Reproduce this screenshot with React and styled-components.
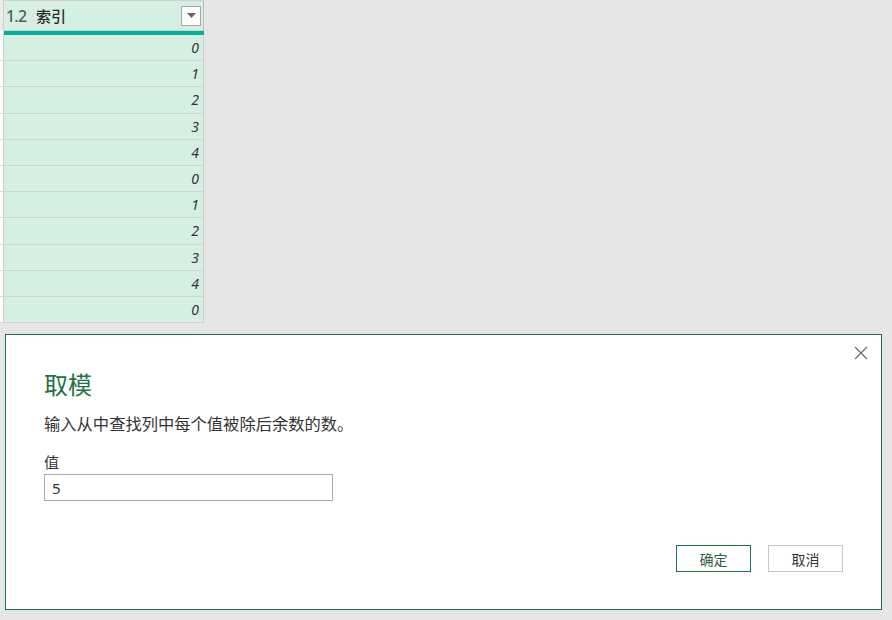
import React from 'react'
import styled, { createGlobalStyle } from 'styled-components'

const GlobalStyle = createGlobalStyle`
    html, body {
        margin: 0;
        padding: 0;
        background: #e6e6e6;
        font-family: "Noto Sans", "Noto Sans CJK SC", sans-serif;
        color: #333333;
    }
`

const values = [0, 1, 2, 3, 4, 0, 1, 2, 3, 4, 0]

const App = () => {
    return (
        <>
            <GlobalStyle />
            <Page>
                <Table>
                    <HeaderRow>
                        <Stub $header />
                        <HeaderCell>
                            <TypeTag>1.2</TypeTag>
                            <ColumnName>索引</ColumnName>
                            <FilterButton>
                                <svg width='9' height='5' viewBox='0 0 9 5'>
                                    <path d='M0 0 L9 0 L4.5 5 Z' fill='#666666' />
                                </svg>
                            </FilterButton>
                        </HeaderCell>
                    </HeaderRow>
                    <QualityRow>
                        <Stub />
                        <QualityBar />
                    </QualityRow>
                    {values.map((v, i) => (
                        <Row key={i}>
                            <Stub $line />
                            <Cell>{v}</Cell>
                        </Row>
                    ))}
                </Table>

                <Dialog>
                    <CloseButton aria-label='关闭'>
                        <svg width='14' height='14' viewBox='0 0 14 14'>
                            <path d='M1 1 L13 13 M13 1 L1 13' stroke='#6b6b6b' strokeWidth='1.2' />
                        </svg>
                    </CloseButton>
                    <Title>取模</Title>
                    <Description>输入从中查找列中每个值被除后余数的数。</Description>
                    <Label>值</Label>
                    <ValueInput defaultValue='5' />
                    <ButtonRow>
                        <Button $primary>确定</Button>
                        <Button>取消</Button>
                    </ButtonRow>
                </Dialog>
            </Page>
        </>
    )
}

export default App

const Page = styled.div`
    width: 892px;
    height: 620px;
    display: flex;
    flex-direction: column;
    overflow: hidden;
`

const Table = styled.div`
    display: flex;
    flex-direction: column;
    width: 204px;
`

const HeaderRow = styled.div`
    display: flex;
    height: 31px;
`

const Stub = styled.div`
    width: 4px;
    flex: none;
    box-sizing: border-box;
    background: ${(p) => (p.$header ? '#ececec' : '#ffffff')};
    border-right: 1px solid #cfcfcf;
    border-bottom: ${(p) => (p.$line ? '1px solid #d6d6d6' : 'none')};
`

const HeaderCell = styled.div`
    flex: 1;
    box-sizing: border-box;
    display: flex;
    align-items: center;
    padding: 0 2px 0 2px;
    background: #d5f0e2;
    border-top: 1px solid #cfcfcf;
    border-right: 1px solid #bcbcbc;
    border-bottom: 1px solid #d0d0d0;
`

const TypeTag = styled.span`
    font-family: "Noto Sans", sans-serif;
    font-size: 16px;
    font-weight: 500;
    color: #595959;
    letter-spacing: -0.8px;
    width: 30px;
`

const ColumnName = styled.span`
    flex: 1;
    font-family: "Noto Sans CJK SC", sans-serif;
    font-size: 15px;
    font-weight: 500;
    color: #2b2b2b;
`

const FilterButton = styled.div`
    width: 20px;
    height: 20px;
    box-sizing: border-box;
    border: 1px solid #a8a8a8;
    background: #ffffff;
    display: flex;
    align-items: center;
    justify-content: center;
`

const QualityRow = styled.div`
    display: flex;
    height: 4px;
`

const QualityBar = styled.div`
    flex: 1;
    background: #00b3a1;
`

const Row = styled.div`
    display: flex;
    height: 26.2px;
`

const Cell = styled.div`
    flex: 1;
    box-sizing: border-box;
    display: flex;
    align-items: center;
    justify-content: flex-end;
    padding-right: 4px;
    background: #d5f0e2;
    border-right: 1px solid #cccccc;
    border-bottom: 1px solid #d3d3d3;
    font-family: "Noto Sans", sans-serif;
    font-style: italic;
    font-size: 14px;
    color: #333333;
`

const Dialog = styled.div`
    position: relative;
    margin: 11px 0 0 5px;
    width: 877px;
    height: 276px;
    box-sizing: border-box;
    background: #ffffff;
    border: 1px solid #1f7044;
    padding: 33px 38px 0 38px;
    display: flex;
    flex-direction: column;
`

const CloseButton = styled.div`
    position: absolute;
    top: 10px;
    right: 12px;
    width: 16px;
    height: 16px;
    display: flex;
    align-items: center;
    justify-content: center;
`

const Title = styled.div`
    font-family: "Noto Sans CJK SC", sans-serif;
    font-size: 24px;
    line-height: 32px;
    color: #217346;
`

const Description = styled.div`
    margin-top: 12px;
    font-family: "Noto Sans CJK SC", sans-serif;
    font-size: 16.3px;
    line-height: 22px;
    color: #333333;
`

const Label = styled.div`
    margin-top: 18px;
    font-family: "Noto Sans CJK SC", sans-serif;
    font-size: 15px;
    line-height: 20px;
    color: #333333;
`

const ValueInput = styled.input`
    margin-top: 2px;
    width: 289px;
    height: 27px;
    box-sizing: border-box;
    border: 1px solid #ababab;
    padding: 0 7px;
    font-family: "Noto Sans", sans-serif;
    font-size: 15px;
    color: #333333;
    outline: none;
`

const ButtonRow = styled.div`
    margin-top: 44px;
    display: flex;
    justify-content: flex-end;
    gap: 17px;
`

const Button = styled.div`
    width: 75px;
    height: 27px;
    box-sizing: border-box;
    display: flex;
    align-items: center;
    justify-content: center;
    background: #ffffff;
    border: 1px solid ${(p) => (p.$primary ? '#217346' : '#c6c6c6')};
    font-family: "Noto Sans CJK SC", sans-serif;
    font-size: 14px;
    color: ${(p) => (p.$primary ? '#2a5d47' : '#333333')};
`
